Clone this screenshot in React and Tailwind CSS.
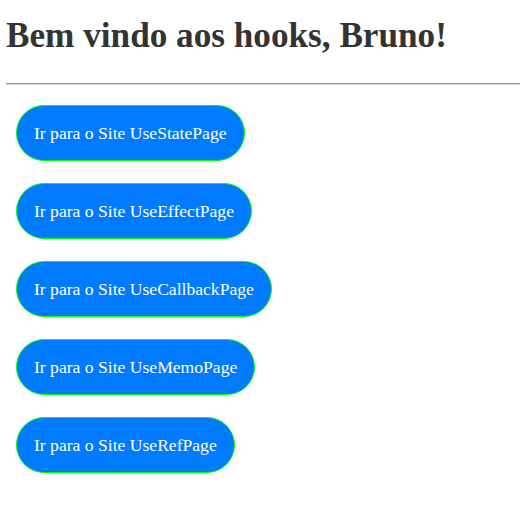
import React from 'react';

const pages = ['UseStatePage', 'UseEffectPage', 'UseCallbackPage', 'UseMemoPage', 'UseRefPage'];

function App() {
    return (
        <div className="pl-[6px] pr-[2px] pt-[16px] bg-white min-h-[527px]" style={{ fontFamily: '"Liberation Serif", "Times New Roman", serif' }}>
            <h1 className="text-[35.2px] font-bold leading-[40px] text-[#333333]">Bem vindo aos hooks, Bruno!</h1>
            <hr className="mt-[27px] border-0 border-t border-b border-t-[#9a9a9a] border-b-[#d8d8d8]" />
            <div className="flex flex-col items-start gap-[22px] pt-[20px] pl-[10px]">
                {pages.map(page => (
                    <button
                        key={page}
                        className="h-[56px] px-[17px] rounded-full bg-[#007bff] border border-[#00ff00] text-white text-[17.6px] leading-[20px]"
                        style={{ fontFamily: '"Liberation Serif", "Times New Roman", serif' }}
                    >
                        Ir para o Site {page}
                    </button>
                ))}
            </div>
        </div>
    );
}

export default App;
